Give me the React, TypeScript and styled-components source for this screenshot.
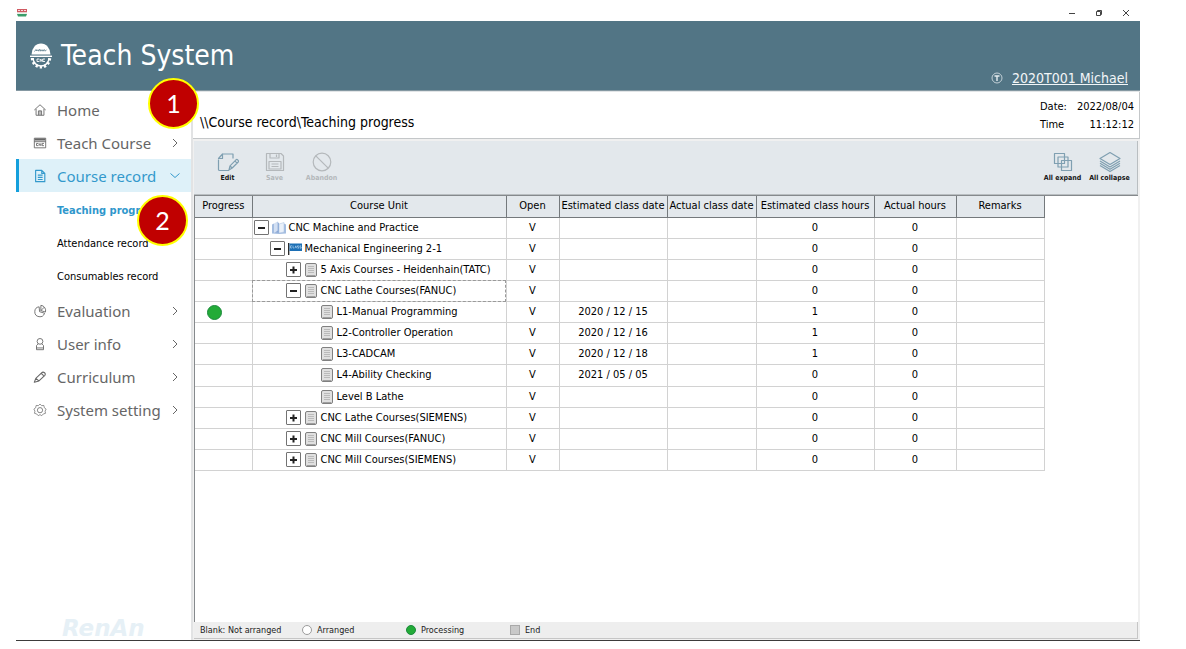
import React from "react";
import styled, { createGlobalStyle, css } from "styled-components";

const uiFont = `"DejaVu Sans Condensed", Tahoma, "DejaVu Sans", sans-serif`;

const GlobalStyle = createGlobalStyle`
  *, *::before, *::after { box-sizing: border-box; }
  body { margin: 0; background: #fff; color: #000; font-family: ${uiFont}; font-size: 11px; }
  button { font: inherit; color: inherit; background: none; border: 0; padding: 0; }
  a { color: inherit; text-decoration: none; }
  ul { list-style: none; margin: 0; padding: 0; }
`;

const Page = styled.div`
  min-height: 100vh;
  padding: 5px 46px 8px 16px;
  display: flex;
  flex-direction: column;
`;

const TitleBar = styled.div`
  height: 16px;
  display: flex;
  align-items: center;
  justify-content: space-between;
  padding: 0 8px 0 1px;
  color: #444;
`;

const WindowControls = styled.div`
  display: flex;
  gap: 15px;
`;

const WindowButton = styled.button`
  width: 12px;
  height: 16px;
  display: grid;
  place-items: center;
`;

const Header = styled.header`
  height: 70px;
  background: #527585;
  color: #fff;
  display: flex;
  align-items: flex-end;
  justify-content: space-between;
  border-bottom: 1px solid #8598a2;
`;

const Brand = styled.h1`
  margin: 0;
  padding: 0 0 17px 14px;
  display: flex;
  align-items: center;
  gap: 9px;
  font-size: 28px;
  line-height: 34px;
  font-weight: 400;
`;

const UserLink = styled.a`
  display: flex;
  align-items: center;
  gap: 9px;
  padding: 0 12px 3px 0;
  font-size: 14px;
  line-height: 18px;
  color: #f2f6f8;
  span { text-decoration: underline; }
`;

const Body = styled.div`
  flex: 1;
  display: flex;
  border-bottom: 1px solid #3c3c3c;
`;

const Sidebar = styled.nav`
  position: relative;
  width: 175px;
  flex: none;
  display: flex;
  flex-direction: column;
  padding-top: 2px;
`;

const NavItem = styled.a<{ $active?: boolean }>`
  height: 33px;
  display: grid;
  grid-template-columns: 14px 1fr 12px;
  column-gap: 10px;
  align-items: center;
  padding: 0 10px 0 14px;
  border-left: 3px solid transparent;
  font-family: "Noto Sans", sans-serif;
  font-size: 15px;
  line-height: 20px;
  white-space: nowrap;
  color: #666;
  span { min-width: 0; }
  ${(p) =>
    p.$active &&
    css`
      color: #3399cc;
      background: #def1f9;
      border-left-color: #149fdc;
    `}
`;

const SubMenu = styled.ul`
  padding: 2px 0 1px 41px;
`;

const SubLink = styled.a<{ $current?: boolean }>`
  display: block;
  height: 33px;
  line-height: 33px;
  font-size: 11px;
  white-space: nowrap;
  color: ${(p) => (p.$current ? "#2f97cc" : "#000")};
  font-weight: ${(p) => (p.$current ? 700 : 400)};
`;

const Watermark = styled.div`
  margin-top: auto;
  padding-left: 46px;
  font: italic 700 23px/24px "DejaVu Sans", sans-serif;
  color: #e6f0f6;
`;

const Step = styled.div<{ $left: number; $top: number }>`
  position: absolute;
  z-index: 2;
  left: ${(p) => p.$left}px;
  top: ${(p) => p.$top}px;
  width: 51px;
  height: 51px;
  border: 2px solid #ffff00;
  border-radius: 50%;
  background: #c00000;
  color: #fff;
  text-align: center;
  font: 25px/46px Lato, sans-serif;
`;

const Main = styled.main`
  flex: 1;
  min-width: 0;
  display: flex;
  flex-direction: column;
  background: #f0f0f0;
  border-left: 2px solid #e2e3e4;
  border-top: 1px solid #e2e5e7;
  padding: 0 2px 1px 1px;
`;

const PathBar = styled.div`
  height: 47px;
  display: flex;
  justify-content: space-between;
  align-items: center;
  margin: 0 -2px 0 -1px;
  padding: 0 5px 0 7px;
  background: #fff;
  border: solid #c4c7c9;
  border-width: 0 1px 1px 0;
`;

const Path = styled.h2`
  margin: 0;
  padding-top: 14px;
  font-size: 14px;
  line-height: 18px;
  font-weight: 400;
`;

const Clock = styled.dl`
  margin: 0;
  padding-top: 1px;
  display: grid;
  grid-template-columns: auto auto;
  column-gap: 10px;
  font-size: 11px;
  line-height: 18px;
  dd { margin: 0; text-align: right; }
`;

const Toolbar = styled.div`
  height: 54px;
  margin-top: 2px;
  display: flex;
  justify-content: space-between;
  padding: 10px 4px 0 10px;
  background: #e3e8ec;
  border: solid #b9bec1;
  border-width: 0 1px 1px 0;
`;

const ToolGroup = styled.div`
  display: flex;
`;

const ToolButton = styled.button`
  width: 47px;
  display: flex;
  flex-direction: column;
  align-items: center;
  font-size: 7px;
  line-height: 10px;
  font-weight: 700;
  white-space: nowrap;
  color: #151515;
  svg { color: #7f9fb1; }
  &:disabled, &:disabled svg { color: #b4b8bb; }
`;

const GridArea = styled.div`
  flex: 1;
  background: #fff;
  border-left: 1px solid #85898c;
  border-top: 1px solid #85898c;
`;

const Grid = styled.table`
  width: 849px;
  height: 275px;
  table-layout: fixed;
  border-collapse: collapse;
  line-height: 16px;
`;

const HeadCell = styled.th`
  height: 21px;
  padding: 0;
  font-weight: 400;
  white-space: nowrap;
  background: #e3e8ec;
  border: solid #74797c;
  border-width: 0 1px 1px 0;
`;

const Cell = styled.td`
  height: 21px;
  padding: 0;
  text-align: center;
  white-space: nowrap;
  border: solid #d2d2d2;
  border-width: 0 1px 1px 0;
`;

const ProgressCell = styled(Cell)`
  padding-left: 12px;
  text-align: left;
`;

const UnitCell = styled(Cell)<{ $focused?: boolean }>`
  ${(p) => p.$focused && "outline: 1px dashed #9a9a9a; outline-offset: -1px;"}
`;

const Unit = styled.div<{ $level: number }>`
  display: flex;
  align-items: center;
  height: 20px;
  padding-left: ${(p) => 1 + p.$level * 16}px;
`;

const Toggle = styled.button`
  width: 15px;
  height: 15px;
  flex: none;
  display: grid;
  place-items: center;
  border: 1px solid #737373;
  border-radius: 1px;
  background: #fff;
`;

const ToggleGap = styled.span`
  width: 15px;
  flex: none;
`;

const UnitIcon = styled.span`
  width: 20px;
  flex: none;
  display: grid;
  place-items: center;
`;

const Dot = styled.span<{ $size: number; $filled?: boolean }>`
  display: inline-block;
  vertical-align: middle;
  width: ${(p) => p.$size}px;
  height: ${(p) => p.$size}px;
  border-radius: 50%;
  border: 1px solid ${(p) => (p.$filled ? "#1b8a3c" : "#9c9c9c")};
  background: ${(p) => (p.$filled ? "#23ab38" : "#fff")};
`;

const EndBox = styled.span`
  width: 10px;
  height: 10px;
  border: 1px solid #a9a9a9;
  background: #c9c9c9;
`;

const Legend = styled.div`
  height: 17px;
  display: grid;
  grid-template-columns: 102px 104px 104px auto;
  align-items: center;
  padding-left: 6px;
  font-size: 9px;
  line-height: 14px;
  background: #eee;
  border: solid #c6c6c6;
  border-width: 0 1px 1px 0;
  color: #222;
`;

const LegendItem = styled.span`
  display: flex;
  align-items: center;
  gap: 5px;
`;

const Svg = ({ size = 14, box = 16, children, width = 1 }: { size?: number; box?: number; width?: number; children: React.ReactNode }) => (
  <svg width={size} height={size} viewBox={`0 0 ${box} ${box}`} fill="none" stroke="currentColor" strokeWidth={width} strokeLinejoin="round" aria-hidden="true">
    {children}
  </svg>
);

const navIcons = {
  home: (
    <Svg>
      <path d="M1.5 8 8 2l6.5 6M3.5 6.8V14h9V6.8M6.2 14V9h3.6v5M8 9v5" />
    </Svg>
  ),
  course: (
    <Svg>
      <path d="M1.5 2.5h13v11h-13z" />
      <path d="M2 4h12" strokeWidth="2.4" />
      <path d="M1.5 6.5h13" />
      <path d="M6 8.500H4v2.500h2M7 11.200V8.600l2 2.400V8.300M12.500 8.500h-2v2.500h2" />
    </Svg>
  ),
  record: (
    <Svg>
      <path d="M3 1.500h7l3.500 3.500v9.500H3zM10 1.500V5h3.500M5.500 7h5.500M5.500 9.500h5.500M5.500 12h5.500" strokeWidth="1.300" />
    </Svg>
  ),
  evaluation: (
    <Svg>
      <path d="M7 3.200a5.700 5.700 0 1 0 6.200 7.300L7.500 8.800z" />
      <path d="M9 1.500v6l5.200 1.700A6 6 0 0 0 9 1.500zM9 7.500l4-4" />
    </Svg>
  ),
  user: (
    <Svg>
      <circle cx="8" cy="5" r="3.300" />
      <path d="M6 7.800 4 9.800v4.700h8V9.800l-2-2M4 12.500h8" />
    </Svg>
  ),
  pencil: (
    <Svg width={1.2}>
      <path d="M1.500 14 3.200 9.500l6.600-6.300c2-1.900 5.900.6 3.500 3.200L6.800 12.500zM8.600 4.500c1.500-.6 3.600 1 3.200 3M3.200 9.500l3.600 3" />
    </Svg>
  ),
  gear: (
    <Svg>
      <path d="M8 1.200 9.800 3l2.600-.2.500 2.600L15 7l-1.200 2.300.5 2.500-2.500.7L10 14.500l-2-1.200-2 1.200-1.800-2-2.500-.7.500-2.500L1 7l2.100-1.600.5-2.600L6.200 3z" strokeWidth=".8" />
      <circle cx="8" cy="8.200" r="3" strokeWidth=".9" />
    </Svg>
  ),
};

const Chevron = ({ open }: { open?: boolean }) => (
  <Svg size={12} box={12}>
    <path d={open ? "M1.500 3.500 6 7.500l4.500-4" : "M4 2 8 6l-4 4"} />
  </Svg>
);

const Logo = () => (
  <svg width="22" height="28" viewBox="0 0 22 28" aria-hidden="true">
    <path d="M1.500 12.500a9.500 11 0 0 1 19 0z" fill="#fff" />
    <path d="M4.500 9.500l1.500-2 .8 1.500 1.200-1.300.8 1.500 1-2 1 2 1.200-1.500 1 1.500 1.200-1.700 1 1.700 1.300-1.500" stroke="#527585" strokeWidth=".8" fill="none" />
    <path d="M0 14.300h22" stroke="#fff" strokeWidth="1.400" />
    <path d="M3 16a8 8 0 0 0 16 0" fill="none" stroke="#fff" strokeWidth="1.500" />
    <path d="M2.300 16a8.700 9 0 0 0 17.400 0" fill="none" stroke="#fff" strokeWidth="3" strokeDasharray="2.200 2" />
    <path d="M9.300 17H7v2.500h2.300M10.200 19.800v-2.600l1.800 2.300v-2.600M15 17h-2.200v2.500H15" stroke="#fff" strokeWidth=".9" fill="none" />
  </svg>
);

const AppIcon = () => (
  <svg width="10" height="8" viewBox="0 0 10 8" aria-hidden="true">
    <path d="M0 0h10v3.500H0z" fill="#d05a62" />
    <path d="M1 1.500h2M4 1.500h2M7 1.500h2" stroke="#fff" strokeWidth=".8" />
    <path d="M0 3.500h10v1.500H0z" fill="#e9f2ea" />
    <path d="M0 5h10L9 7.500H1z" fill="#3a9d6a" />
  </svg>
);

const ClassSign = () => (
  <svg width="14" height="13" viewBox="0 0 14 13" aria-hidden="true">
    <path d="M.7 1v12" stroke="#222" strokeWidth="1.300" />
    <path d="M1.500 1.500H14v7.500H1.500z" fill="#1b6fb5" />
    <path d="M4 3.800H2.500V6H4M5 3.500V6h1.300M7 6.200l.8-2.400.8 2.400M10.800 3.800H9.500V5h1.300v1.200H9.500M13.200 3.800h-1.300V5h1.300v1.200h-1.300" stroke="#c9e2f6" strokeWidth=".6" fill="none" />
  </svg>
);

const Book = () => (
  <svg width="14" height="14" viewBox="0 0 14 14" aria-hidden="true">
    <path d="M0 3.500 2 2.500v8.500l5 .5 5-.5V2.500l2 1v9L7 13 0 12.500z" fill="#a4bde0" />
    <path d="M2 2.500 5.500.5v9L3 11.500H2z" fill="#d3e0f3" />
    <path d="M5.500.5 7 2.500v9.500l-4-.5 2.500-2z" fill="#8ba9d6" />
    <path d="M7 3 12 1.500V11l-5 1z" fill="#e9f0f9" stroke="#a9c0e0" strokeWidth=".5" />
  </svg>
);

const Sheet = () => (
  <svg width="12" height="14" viewBox="0 0 12 14" aria-hidden="true">
    <rect x=".5" y=".5" width="11" height="13" rx="1.500" fill="#e0e0e0" stroke="#808080" />
    <path d="M2 12.500h8" stroke="#a0a0a0" />
    <path d="M3 3.500h6M3 5.500h6M3 7.500h6M3 9.500h6" stroke="#b0b0b0" strokeWidth=".8" />
  </svg>
);

const toolIcons = {
  edit: (
    <Svg size={22} box={22} width={1.2}>
      <path d="M12 19.500H2.500c-.8 0-1-.4-1-1V8.500M1.500 7.500 5.500 3v4.500zM5.500 3h10.500v4.500" />
      <path d="m12 19 1-4.200 6-6c1.200-1 3.200 1 2.200 2.200l-6 6zM13 14.800l2.200 2.200M17.800 9.800l2.300 2.300" />
    </Svg>
  ),
  save: (
    <Svg size={22} box={22} width={1.2}>
      <path d="M2.500 2.500h14.500l2.500 2.500v14.500h-17z" />
      <path d="M6 2.500v4.500h9V2.500M12.500 3.500v2.500M5 10.500h12v7.500H5zM7.500 13h7M7.500 15.500h7" />
    </Svg>
  ),
  abandon: (
    <Svg size={22} box={22} width={1.2}>
      <circle cx="11" cy="11" r="8.800" />
      <path d="m4.800 4.800 12.400 12.400" />
    </Svg>
  ),
  expand: (
    <Svg size={22} box={22} width={1.200}>
      <path d="M2.500 2.500h10v10h-10zM6 6h10v10H6zM9.500 9.500h10v10h-10z" />
    </Svg>
  ),
  collapse: (
    <Svg size={22} box={22} width={1.200}>
      <path d="M11 1.500 21 7.500l-10 6-10-6z" />
      <path d="m1 10 10 6 10-6M1 12.300l10 6 10-6M1 14.600l10 6 10-6" />
    </Svg>
  ),
};

type IconName = keyof typeof navIcons;

const topItems: { icon: IconName; label: string; expandable: boolean; active?: boolean }[] = [
  { icon: "home", label: "Home", expandable: false },
  { icon: "course", label: "Teach Course", expandable: true },
  { icon: "record", label: "Course record", expandable: true, active: true },
];

const bottomItems: typeof topItems = [
  { icon: "evaluation", label: "Evaluation", expandable: true },
  { icon: "user", label: "User info", expandable: true },
  { icon: "pencil", label: "Curriculum", expandable: true },
  { icon: "gear", label: "System setting", expandable: true },
];

const columns: [string, number][] = [
  ["Progress", 57],
  ["Course Unit", 254],
  ["Open", 53],
  ["Estimated class date", 108],
  ["Actual class date", 89],
  ["Estimated class hours", 118],
  ["Actual hours", 82],
  ["Remarks", 88],
];

interface Row {
  name: string;
  level: number;
  kind: "book" | "class" | "sheet";
  open?: boolean;
  date?: string;
  hours: number;
  processing?: boolean;
  focused?: boolean;
}

const rows: Row[] = [
  { name: "CNC Machine and Practice", level: 0, kind: "book", open: true, hours: 0 },
  { name: "Mechanical Engineering 2-1", level: 1, kind: "class", open: true, hours: 0 },
  { name: "5 Axis Courses - Heidenhain(TATC)", level: 2, kind: "sheet", open: false, hours: 0 },
  { name: "CNC Lathe Courses(FANUC)", level: 2, kind: "sheet", open: true, hours: 0, focused: true },
  { name: "L1-Manual Programming", level: 3, kind: "sheet", date: "2020 / 12 / 15", hours: 1, processing: true },
  { name: "L2-Controller Operation", level: 3, kind: "sheet", date: "2020 / 12 / 16", hours: 1 },
  { name: "L3-CADCAM", level: 3, kind: "sheet", date: "2020 / 12 / 18", hours: 1 },
  { name: "L4-Ability Checking", level: 3, kind: "sheet", date: "2021 / 05 / 05", hours: 0 },
  { name: "Level B Lathe", level: 3, kind: "sheet", hours: 0 },
  { name: "CNC Lathe Courses(SIEMENS)", level: 2, kind: "sheet", open: false, hours: 0 },
  { name: "CNC Mill Courses(FANUC)", level: 2, kind: "sheet", open: false, hours: 0 },
  { name: "CNC Mill Courses(SIEMENS)", level: 2, kind: "sheet", open: false, hours: 0 },
];

const NavLinks = ({ items }: { items: typeof topItems }) => (
  <>
    {items.map((item) => (
      <NavItem key={item.label} href="#" $active={item.active}>
        {navIcons[item.icon]}
        <span>{item.label}</span>
        {item.expandable && <Chevron open={item.active} />}
      </NavItem>
    ))}
  </>
);

export default function App() {
  return (
    <Page>
      <GlobalStyle />
      <TitleBar>
        <AppIcon />
        <WindowControls>
          <WindowButton aria-label="Minimize">
            <Svg size={10} box={10}><path d="M2 5.500h6" /></Svg>
          </WindowButton>
          <WindowButton aria-label="Restore">
            <Svg size={10} box={10}><path d="M2.500 3.500h4v4h-4zM3.500 3.500v-1h4v4h-1" /></Svg>
          </WindowButton>
          <WindowButton aria-label="Close">
            <Svg size={10} box={10}><path d="m2 2 6 6M8 2 2 8" /></Svg>
          </WindowButton>
        </WindowControls>
      </TitleBar>
      <Header>
        <Brand>
          <Logo />
          Teach System
        </Brand>
        <UserLink href="#">
          <svg width="12" height="12" viewBox="0 0 12 12" fill="none" stroke="#c3d0d7" aria-hidden="true">
            <circle cx="6" cy="6" r="5" />
            <path d="M3.500 4h5M6 4v5" strokeWidth="1.400" stroke="#e6edf0" />
          </svg>
          <span>2020T001 Michael</span>
        </UserLink>
      </Header>
      <Body>
        <Sidebar aria-label="Sections">
          <NavLinks items={topItems} />
          <SubMenu>
            <li><SubLink href="#" $current>Teaching progress</SubLink></li>
            <li><SubLink href="#">Attendance record</SubLink></li>
            <li><SubLink href="#">Consumables record</SubLink></li>
          </SubMenu>
          <NavLinks items={bottomItems} />
          <Watermark>RenAn</Watermark>
          <Step $left={132} $top={-13}>1</Step>
          <Step $left={121} $top={104}>2</Step>
        </Sidebar>
        <Main>
          <PathBar>
            <Path>\\Course record\Teaching progress</Path>
            <Clock>
              <dt>Date:</dt>
              <dd>2022/08/04</dd>
              <dt>Time</dt>
              <dd>11:12:12</dd>
            </Clock>
          </PathBar>
          <Toolbar>
            <ToolGroup>
              <ToolButton>{toolIcons.edit}Edit</ToolButton>
              <ToolButton disabled>{toolIcons.save}Save</ToolButton>
              <ToolButton disabled>{toolIcons.abandon}Abandon</ToolButton>
            </ToolGroup>
            <ToolGroup>
              <ToolButton>{toolIcons.expand}All expand</ToolButton>
              <ToolButton>{toolIcons.collapse}All collapse</ToolButton>
            </ToolGroup>
          </Toolbar>
          <GridArea>
            <Grid>
              <colgroup>
                {columns.map(([name, width]) => (
                  <col key={name} width={width} />
                ))}
              </colgroup>
              <thead>
                <tr>
                  {columns.map(([name]) => (
                    <HeadCell key={name} scope="col">{name}</HeadCell>
                  ))}
                </tr>
              </thead>
              <tbody>
                {rows.map((row) => (
                  <tr key={row.name}>
                    <ProgressCell>{row.processing && <Dot $size={15} $filled />}</ProgressCell>
                    <UnitCell $focused={row.focused}>
                      <Unit $level={row.level}>
                        {row.open === undefined ? (
                          <ToggleGap />
                        ) : (
                          <Toggle aria-label={row.open ? "Collapse" : "Expand"}>
                            <Svg size={9} box={9} width={2}>
                              <path d={row.open ? "M1 5h7" : "M1 5h7M4.500 1.500v7"} stroke="#222" />
                            </Svg>
                          </Toggle>
                        )}
                        <UnitIcon>
                          {row.kind === "book" ? <Book /> : row.kind === "class" ? <ClassSign /> : <Sheet />}
                        </UnitIcon>
                        {row.name}
                      </Unit>
                    </UnitCell>
                    <Cell>V</Cell>
                    <Cell>{row.date}</Cell>
                    <Cell />
                    <Cell>{row.hours}</Cell>
                    <Cell>0</Cell>
                    <Cell />
                  </tr>
                ))}
              </tbody>
            </Grid>
          </GridArea>
          <Legend>
            <span>Blank: Not arranged</span>
            <LegendItem><Dot $size={10} />Arranged</LegendItem>
            <LegendItem><Dot $size={10} $filled />Processing</LegendItem>
            <LegendItem><EndBox />End</LegendItem>
          </Legend>
        </Main>
      </Body>
    </Page>
  );
}
